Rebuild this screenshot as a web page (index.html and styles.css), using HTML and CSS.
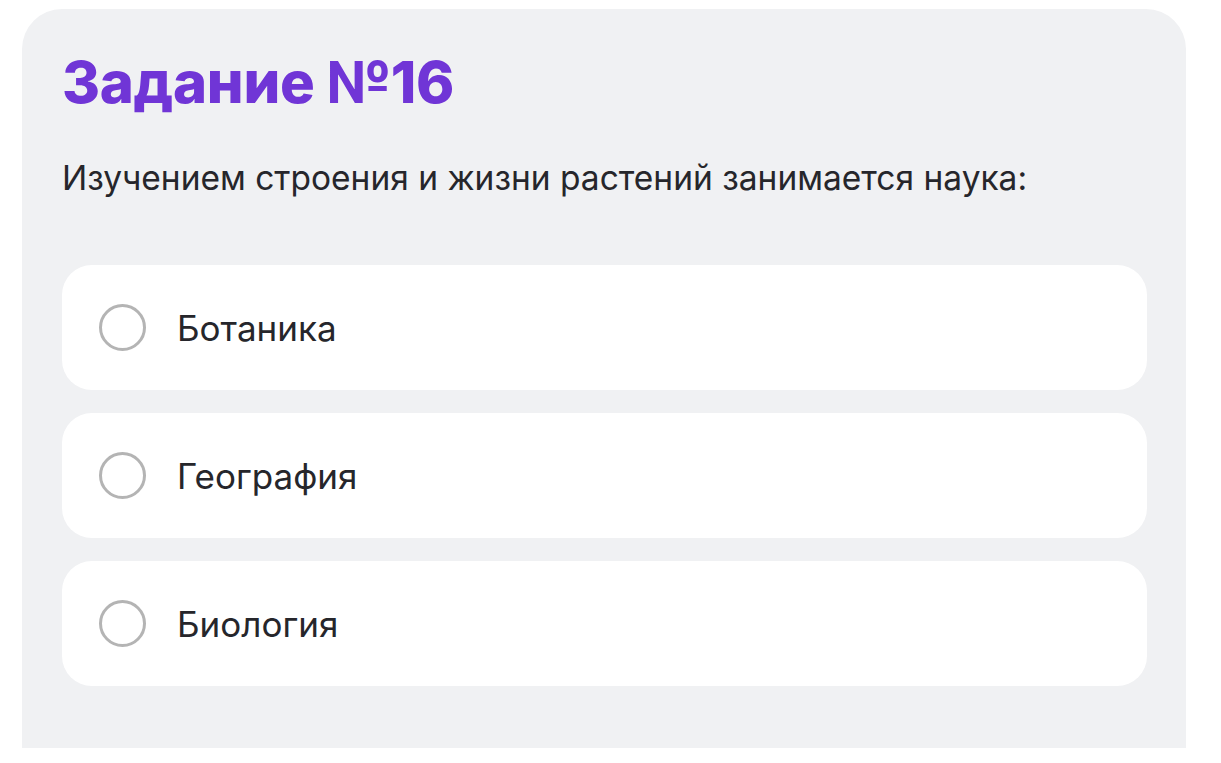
FILE: index.html
```html
<!DOCTYPE html>
<html lang="ru">
<head>
  <meta charset="UTF-8" />
  <meta name="viewport" content="width=device-width, initial-scale=1.0"/>
  <title>Задание №16</title>
  <link rel="stylesheet" href="styles.css">
</head>
<body>

  <div class="task">
    <h1 class="task-title">Задание №16</h1>
    <p class="task-question">Изучением строения и жизни растений занимается наука:</p>

    <div class="options">
      <label class="option">
        <input type="radio" name="answer" value="1">
        <span class="radio"></span>
        <span class="option-text">Ботаника</span>
      </label>
      <label class="option">
        <input type="radio" name="answer" value="2">
        <span class="radio"></span>
        <span class="option-text">География</span>
      </label>
      <label class="option">
        <input type="radio" name="answer" value="3">
        <span class="radio"></span>
        <span class="option-text">Биология</span>
      </label>
    </div>
  </div>

</body>
</html>
```
FILE: styles.css
```css
body {
  font-family: Inter, "Noto Sans", sans-serif;
  background-color: #ffffff;
  margin: 0;
  padding: 0;
  color: #26262b;
}

.task {
  background: #f0f1f3;
  margin: 9px 0 0 22px;
  width: 1164px;
  height: 739px;
  box-sizing: border-box;
  padding: 38px 39px 0 40px;
  border-radius: 40px 40px 0 0;
}

.task-title {
  margin: 0;
  font-size: 58px;
  font-weight: 800;
  line-height: 70px;
  color: #7035d6;
  letter-spacing: -0.3px;
}

.task-question {
  margin: 41px 0 0;
  font-size: 33.5px;
  line-height: 40px;
  font-weight: 400;
}

.options {
  margin-top: 67px;
  display: flex;
  flex-direction: column;
  gap: 23px;
}

.option {
  display: flex;
  align-items: center;
  height: 125px;
  background: white;
  border-radius: 30px;
  padding-left: 37px;
  cursor: pointer;
}

.option input {
  display: none;
}

.radio {
  width: 41px;
  height: 41px;
  border: 3px solid #b4b4b4;
  border-radius: 50%;
  flex-shrink: 0;
}

.option input:checked + .radio {
  border-color: #7035d6;
  box-shadow: inset 0 0 0 7px white, inset 0 0 0 20px #7035d6;
}

.option-text {
  margin-left: 31px;
  font-size: 35px;
}
```
